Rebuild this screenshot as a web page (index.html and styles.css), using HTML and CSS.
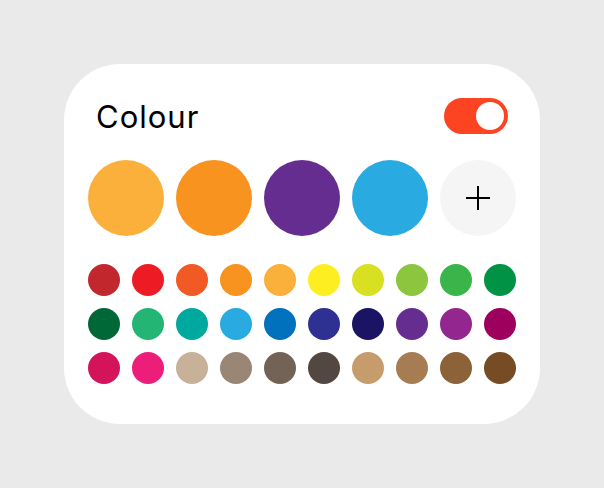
FILE: index.html
```html
<!DOCTYPE html>
<html lang="en">
<head>
<meta charset="utf-8">
<title>Colour</title>
<link rel="stylesheet" href="styles.css">
</head>
<body>
<div class="card">
  <div class="header">
    <h1 class="title">Colour</h1>
    <div class="toggle on"><span class="knob"></span></div>
  </div>
  <div class="recent">
    <span class="big" style="background:#FBB03B"></span>
    <span class="big" style="background:#F7931E"></span>
    <span class="big" style="background:#662D91"></span>
    <span class="big" style="background:#29ABE2"></span>
    <span class="big add">
      <svg width="24" height="24" viewBox="0 0 24 24"><path d="M12 0V24M0 12H24" stroke="#000" stroke-width="2" fill="none"/></svg>
    </span>
  </div>
  <div class="palette">
    <span class="dot" style="background:#C1272D"></span>
    <span class="dot" style="background:#ED1C24"></span>
    <span class="dot" style="background:#F15A24"></span>
    <span class="dot" style="background:#F7931E"></span>
    <span class="dot" style="background:#FBB03B"></span>
    <span class="dot" style="background:#FCEE21"></span>
    <span class="dot" style="background:#D9E021"></span>
    <span class="dot" style="background:#8CC63F"></span>
    <span class="dot" style="background:#39B54A"></span>
    <span class="dot" style="background:#009245"></span>
    <span class="dot" style="background:#006837"></span>
    <span class="dot" style="background:#22B573"></span>
    <span class="dot" style="background:#00A99D"></span>
    <span class="dot" style="background:#29ABE2"></span>
    <span class="dot" style="background:#0071BC"></span>
    <span class="dot" style="background:#2E3192"></span>
    <span class="dot" style="background:#1B1464"></span>
    <span class="dot" style="background:#662D91"></span>
    <span class="dot" style="background:#93278F"></span>
    <span class="dot" style="background:#9E005D"></span>
    <span class="dot" style="background:#D4145A"></span>
    <span class="dot" style="background:#ED1E79"></span>
    <span class="dot" style="background:#C7B299"></span>
    <span class="dot" style="background:#998675"></span>
    <span class="dot" style="background:#736357"></span>
    <span class="dot" style="background:#534741"></span>
    <span class="dot" style="background:#C69C6D"></span>
    <span class="dot" style="background:#A67C52"></span>
    <span class="dot" style="background:#8C6239"></span>
    <span class="dot" style="background:#754C24"></span>
  </div>
</div>
</body>
</html>
```
FILE: styles.css
```css
* { box-sizing: border-box; }
html, body { margin: 0; padding: 0; }
body {
  width: 604px;
  height: 488px;
  background: #EAEAEA;
  font-family: Inter, "Liberation Sans", sans-serif;
  padding: 64px;
}
.card {
  width: 476px;
  height: 360px;
  background: #FFFFFF;
  border-radius: 56px;
  padding: 24px;
  display: flex;
  flex-direction: column;
}
.header {
  height: 56px;
  padding: 0 8px;
  display: flex;
  align-items: center;
  justify-content: space-between;
}
.title {
  margin: 0;
  font-size: 31px;
  font-weight: 400;
  color: #000;
  letter-spacing: 1px;
}
.toggle {
  width: 64px;
  height: 36px;
  border-radius: 18px;
  background: #FC4422;
  padding: 4px;
  display: flex;
  justify-content: flex-end;
}
.knob {
  width: 28px;
  height: 28px;
  border-radius: 50%;
  background: #FFFFFF;
}
.recent {
  margin-top: 16px;
  display: flex;
  gap: 12px;
}
.big {
  width: 76px;
  height: 76px;
  border-radius: 50%;
  display: flex;
  align-items: center;
  justify-content: center;
}
.add { background: #F5F5F5; }
.palette {
  margin-top: 28px;
  display: grid;
  grid-template-columns: repeat(10, 32px);
  gap: 12px;
}
.dot {
  width: 32px;
  height: 32px;
  border-radius: 50%;
}
```
